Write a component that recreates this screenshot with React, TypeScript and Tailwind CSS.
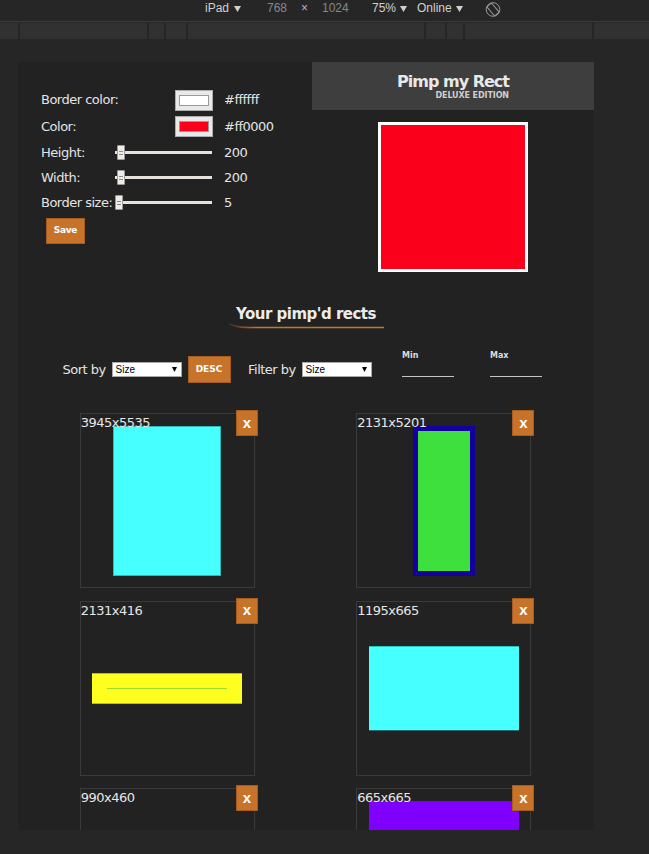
import React from "react";

const ORANGE = "bg-[#c8732a] border border-[#a65c1f]";

function Caret({ className = "" }: { className?: string }) {
  return (
    <svg width="7" height="6" viewBox="0 0 7 6" className={className}>
      <path d="M0 0 L7 0 L3.5 6 Z" fill="currentColor" />
    </svg>
  );
}

function Swatch({ color }: { color: string }) {
  return (
    <div className="w-[38px] h-[21px] px-[3px] py-[4px] bg-[#e9e9e9] border border-[#adadad]">
      <div className={`w-full h-full border border-[#9a9a9a] ${color}`} />
    </div>
  );
}

function Slider({ thumb }: { thumb: string }) {
  return (
    <div className="relative w-[97px] h-[15px] flex items-center">
      <div className="w-full h-[3px] bg-[#e7e3dc]" />
      <div
        className={`absolute top-0 ${thumb} w-[8px] h-[15px] bg-[#efece7] border border-[#9a9a9a] rounded-[1px] flex flex-col items-center justify-center gap-[2px]`}
      >
        <span className="w-[4px] h-px bg-[#8a8a8a]" />
        <span className="w-[4px] h-px bg-[#8a8a8a]" />
      </div>
    </div>
  );
}

function Select() {
  return (
    <div className="w-[70px] h-[15px] bg-white border border-[#a9a9a9] flex items-center justify-between pl-[3px] pr-[4px] text-[10px] leading-none text-black font-['Liberation_Sans',sans-serif] tracking-normal">
      <span>Size</span>
      <svg width="5" height="5" viewBox="0 0 5 5">
        <path d="M0 0 L5 0 L2.5 5 Z" fill="#000" />
      </svg>
    </div>
  );
}

function RangeField({ label }: { label: string }) {
  return (
    <div className="w-[52px] mb-[13px]">
      <div className="h-[11px] text-[8px] font-bold leading-[11px] tracking-normal text-[#dcdcdc]">{label}</div>
      <div className="h-[16px] border-b border-[#c4c4c4]" />
    </div>
  );
}

function Card({ label, children }: { label: string; children: React.ReactNode }) {
  return (
    <div className="flex justify-center">
      <div className="relative w-[175px] h-[175px] border border-[#3a3a3a] flex items-center justify-center">
        <span className="absolute top-0 left-0 pt-[1px] text-[13px] leading-[15px] text-[#e6e6e6]">{label}</span>
        {children}
        <button
          className={`absolute -top-[4px] -right-[4px] w-[22px] h-[26px] ${ORANGE} text-white font-bold text-[15px] leading-none font-['Liberation_Sans',sans-serif] flex items-center justify-center pb-[2px]`}
        >
          x
        </button>
      </div>
    </div>
  );
}

function Toolbar() {
  return (
    <div className="h-[21px] pl-[205px] pt-[1px] flex items-start text-[12px] leading-[15px] font-['Liberation_Sans',sans-serif]">
      <span className="w-[62px] flex items-center gap-[5px] text-[#d0d0d0]">
        iPad <Caret className="text-[#d0d0d0]" />
      </span>
      <span className="w-[34px] text-[#868686]">768</span>
      <span className="w-[21px] text-[#b8b8b8]">×</span>
      <span className="w-[50px] text-[#868686]">1024</span>
      <span className="w-[45px] flex items-center gap-[4px] text-[#d0d0d0]">
        75% <Caret className="text-[#d0d0d0]" />
      </span>
      <span className="w-[68px] flex items-center gap-[4px] text-[#d0d0d0]">
        Online <Caret className="text-[#d0d0d0]" />
      </span>
      <svg width="16" height="17" viewBox="0 0 16 17" className="text-[#9a9a9a]">
        <circle cx="8" cy="8.5" r="6.8" fill="none" stroke="currentColor" strokeWidth="1" />
        <rect x="5" y="2.5" width="6" height="12" rx="1" fill="none" stroke="currentColor" strokeWidth="1" transform="rotate(-40 8 8.5)" />
      </svg>
    </div>
  );
}

function Ruler() {
  const seg = "h-full bg-[#313131]";
  const sep = "w-[2px] h-full bg-[#262626]";
  return (
    <div className="h-[16px] flex">
      <div className={`${seg} w-[18px]`} />
      <div className={sep} />
      <div className={`${seg} w-[127px]`} />
      <div className={sep} />
      <div className={`${seg} w-[15px]`} />
      <div className={sep} />
      <div className={`${seg} w-[20px]`} />
      <div className={sep} />
      <div className={`${seg} w-[236px]`} />
      <div className={sep} />
      <div className={`${seg} w-[19px]`} />
      <div className={sep} />
      <div className={`${seg} w-[16px]`} />
      <div className={sep} />
      <div className={`${seg} w-[127px]`} />
      <div className={sep} />
      <div className={`${seg} flex-1`} />
    </div>
  );
}

export default function App() {
  return (
    <div className="w-[649px] h-[854px] bg-[#262626] overflow-hidden">
      <Toolbar />
      <div className="h-px bg-[#3b3b3b]" />
      <div className="h-px" />
      <Ruler />
      <div className="h-[23px]" />

      {/* emulated page */}
      <div className="ml-[18px] w-[576px] h-[768px] bg-[#222222] overflow-hidden font-['DejaVu_Sans',sans-serif] text-[13px] tracking-[-0.5px] text-[#e4e4e4]">
        <div className="flex h-[211px]">
          {/* editor form */}
          <div className="w-[294px] pt-[25px] pl-[23px]">
            <div className="flex items-center h-[26px]">
              <span className="w-[74px] whitespace-nowrap">Border color:</span>
              <div className="w-[98px] flex justify-end">
                <Swatch color="bg-white" />
              </div>
              <span className="ml-[11px]">#ffffff</span>
            </div>
            <div className="flex items-center h-[27px]">
              <span className="w-[74px] whitespace-nowrap">Color:</span>
              <div className="w-[98px] flex justify-end">
                <Swatch color="bg-[#fa001a]" />
              </div>
              <span className="ml-[11px]">#ff0000</span>
            </div>
            <div className="flex items-center h-[25px]">
              <span className="w-[74px] whitespace-nowrap">Height:</span>
              <div className="w-[98px]">
                <Slider thumb="left-[2px]" />
              </div>
              <span className="ml-[11px]">200</span>
            </div>
            <div className="flex items-center h-[25px]">
              <span className="w-[74px] whitespace-nowrap">Width:</span>
              <div className="w-[98px]">
                <Slider thumb="left-[2px]" />
              </div>
              <span className="ml-[11px]">200</span>
            </div>
            <div className="flex items-center h-[25px]">
              <span className="w-[74px] whitespace-nowrap">Border size:</span>
              <div className="w-[98px]">
                <Slider thumb="left-0" />
              </div>
              <span className="ml-[11px]">5</span>
            </div>
            <button
              className={`mt-[3px] ml-[5px] w-[39px] h-[26px] ${ORANGE} text-white text-[9px] font-bold tracking-[-0.3px]`}
            >
              Save
            </button>
          </div>

          {/* header + preview */}
          <div className="w-[282px]">
            <div className="h-[48px] bg-[#3e3e3e] pt-[10px] flex justify-center">
              <div className="flex flex-col items-end">
                <span className="text-[16px] leading-[19px] font-bold tracking-[-1px] text-[#e8e8e8]">Pimp my Rect</span>
                <span className="text-[8px] leading-[10px] font-bold tracking-[-0.1px] text-[#cfcfcf]">DELUXE EDITION</span>
              </div>
            </div>
            <div className="mt-[12px] mx-auto w-[150px] h-[150px] border-[3px] border-white bg-[#fa001a]" />
          </div>
        </div>

        {/* list title */}
        <div className="mt-[32px] h-[18px] text-center text-[15px] leading-[18px] font-bold text-[#ececec]">
          Your pimp'd rects
        </div>
        <div className="h-[6px] flex justify-center">
          <svg width="156" height="6" viewBox="0 0 156 6">
            <defs>
              <linearGradient id="ul" x1="0" x2="1" y1="0" y2="0">
                <stop offset="0" stopColor="#c8732a" stopOpacity="0.15" />
                <stop offset="0.18" stopColor="#c8732a" />
              </linearGradient>
            </defs>
            <path d="M1 1 Q 9 4.6 22 4.6 L 156 4.6" stroke="url(#ul)" strokeWidth="1.5" fill="none" />
          </svg>
        </div>

        {/* sort / filter */}
        <div className="mt-[27px] h-[27px] flex items-center pl-[44.5px]">
          <span className="w-[49px]">Sort by</span>
          <Select />
          <button className={`ml-[6px] w-[43px] h-[27px] ${ORANGE} text-white text-[9px] font-bold tracking-normal`}>
            DESC
          </button>
          <span className="ml-[17.5px] w-[53.5px]">Filter by</span>
          <Select />
          <div className="ml-[30.5px]">
            <RangeField label="Min" />
          </div>
          <div className="ml-[36px]">
            <RangeField label="Max" />
          </div>
        </div>

        {/* rect cards */}
        <div className="mt-[30px] ml-[11px] w-[553px] grid grid-cols-2 gap-y-[12.5px]">
          <Card label="3945x5535">
            <div className="w-[108px] h-[150px] bg-[#46ffff] border border-[#30b8b8]" />
          </Card>
          <Card label="2131x5201">
            <div className="w-[62px] h-[150px] bg-[#3de03d] border-[5px] border-[#13009f]" />
          </Card>
          <Card label="2131x416">
            <div className="w-[150px] h-[31px] bg-[#ffff1f] border-y border-[#a8c21c] flex items-center justify-center">
              <div className="w-[120px] h-px bg-[#9bdc2c]" />
            </div>
          </Card>
          <Card label="1195x665">
            <div className="w-[150px] h-[85px] bg-[#46ffff] border-t border-b border-t-[#2fc0c0] border-b-[#2a6a6a]" />
          </Card>
          <Card label="990x460">
            <div className="w-[150px] h-[70px] bg-[#ff8c1a]" />
          </Card>
          <Card label="665x665">
            <div className="w-[150px] h-[150px] bg-[#8000ff]" />
          </Card>
        </div>
      </div>
    </div>
  );
}
